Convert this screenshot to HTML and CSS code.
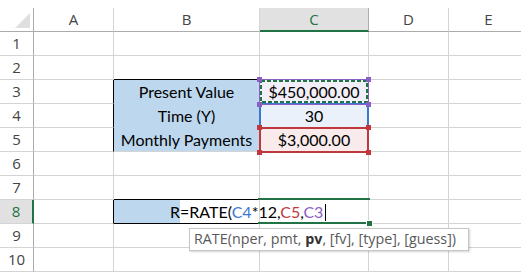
FILE: index.html
```html
<!DOCTYPE html>
<html>
<head>
<meta charset="utf-8">
<link rel="stylesheet" href="styles.css">
</head>
<body>
<div class="sheet">
  <div class="grid">
    <div class="corner"><span class="tri"></span></div>
    <div class="ch">A</div><div class="ch">B</div><div class="ch sel">C</div><div class="ch">D</div><div class="ch">E</div>

    <div class="rh">1</div><div class="c"></div><div class="c"></div><div class="c"></div><div class="c"></div><div class="c"></div>
    <div class="rh">2</div><div class="c"></div><div class="c bk-b"></div><div class="c"></div><div class="c"></div><div class="c"></div>
    <div class="rh">3</div><div class="c bk-r"></div><div class="c lab nb">Present Value</div><div class="c val v-p">$450,000.00</div><div class="c"></div><div class="c"></div>
    <div class="rh">4</div><div class="c bk-r"></div><div class="c lab nb">Time (Y)</div><div class="c val v-b">30</div><div class="c"></div><div class="c"></div>
    <div class="rh">5</div><div class="c bk-r"></div><div class="c lab">Monthly Payments</div><div class="c val v-r">$3,000.00</div><div class="c"></div><div class="c"></div>
    <div class="rh">6</div><div class="c"></div><div class="c"></div><div class="c"></div><div class="c"></div><div class="c"></div>
    <div class="rh">7</div><div class="c"></div><div class="c bk-b"></div><div class="c"></div><div class="c"></div><div class="c"></div>
    <div class="rh sel">8</div><div class="c bk-r"></div><div class="c edit-b"></div><div class="c"></div><div class="c"></div><div class="c"></div>
    <div class="rh">9</div><div class="c"></div><div class="c"></div><div class="c"></div><div class="c"></div><div class="c"></div>
    <div class="rh">10</div><div class="c"></div><div class="c"></div><div class="c"></div><div class="c"></div><div class="c"></div>
  </div>

  <div class="layer">
    <div class="ref ref-c4"></div>
    <div class="ref ref-c3">
      <svg class="ants" width="108" height="23" viewBox="0 0 108 23"><rect x="1" y="1" width="106" height="21" fill="none" stroke="#217346" stroke-width="2" stroke-dasharray="4 2"/></svg>
      <span class="h tl"></span><span class="h tr"></span><span class="h bl"></span><span class="h br"></span>
    </div>
    <div class="ref ref-c5">
      <span class="h tl"></span><span class="h tr"></span><span class="h bl"></span><span class="h br"></span>
    </div>
    <div class="active"><span class="fill"></span></div>
    <div class="formula">R=RATE(<span class="f-b">C4</span>*12,<span class="f-r">C5</span>,<span class="f-p">C3</span><span class="caret"></span></div>
  </div>

  <div class="tip">RATE(nper, pmt, <b>pv</b>, [fv], [type], [guess])</div>
</div>
</body>
</html>
```

FILE: styles.css
```css
html, body {
  margin: 0;
  padding: 0;
  background: #fff;
  overflow: hidden;
}
body {
  padding-top: 8px;
}
.sheet {
  position: relative;
  width: 529px;
  height: 264px;
}
.grid, .layer {
  display: grid;
  grid-template-columns: 34px 80px 146px 109px 80px 80px;
  grid-template-rows: repeat(11, 24px);
}
.layer {
  position: absolute;
  left: 0;
  top: 0;
  right: 0;
  bottom: 0;
  pointer-events: none;
}
.grid > div, .layer > div {
  box-sizing: border-box;
}
.corner {
  position: relative;
  border-right: 1px solid #ababab;
  border-bottom: 1px solid #ababab;
}
.tri {
  position: absolute;
  right: 3px;
  bottom: 3px;
  width: 0;
  height: 0;
  border-left: 15px solid transparent;
  border-bottom: 15px solid #dfdfdf;
}
.ch, .rh {
  font-family: "Open Sans", "Noto Sans", sans-serif;
  font-size: 15px;
  line-height: 23px;
  color: #444;
  text-align: center;
}
.ch {
  border-right: 1px solid #d4d4d4;
  border-bottom: 1px solid #ababab;
}
.ch.sel {
  background: #e1e1e1;
  color: #217346;
  border-bottom: 2px solid #217346;
  border-right-color: #ababab;
}
.rh {
  border-right: 1px solid #ababab;
  border-bottom: 1px solid #d4d4d4;
}
.rh.sel {
  background: #e1e1e1;
  color: #217346;
  border-right: 2px solid #217346;
}
.c {
  border-right: 1px solid #d4d4d4;
  border-bottom: 1px solid #d4d4d4;
  font-family: "Lato", "Liberation Sans", sans-serif;
  font-size: 16px;
  line-height: 23px;
  color: #000;
  white-space: nowrap;
}
.bk-r { border-right-color: #000; }
.bk-b { border-bottom-color: #000; }
.lab {
  background: #bdd7ee;
  text-align: center;
}
.lab.nb { border-bottom-color: #bdd7ee; }
.val { text-align: center; }
.v-p { background: #f3eff8; }
.v-b { background: #eaf1fa; }
.v-r { background: #f9ebeb; }
.edit-b {
  border-bottom-color: #000;
  background: linear-gradient(to right, #bdd7ee 66px, #fff 66px);
}

/* reference boxes */
.ref {
  position: relative;
  z-index: 2;
  grid-column: 4;
  margin: -1px 0 -1px -1px;
}
.ref-c4 {
  grid-row: 5;
  z-index: 1;
  border: 2px solid #3a78d0;
}
.ref-c3 {
  grid-row: 4;
  border: 1px solid #8a5fc4;
}
.ref-c5 {
  grid-row: 6;
  border: 2px solid #c0383e;
}
.ants {
  display: block;
}
.h {
  position: absolute;
  width: 5px;
  height: 5px;
}
.ref-c3 .h { background: #8a5fc4; }
.ref-c5 .h { background: #c0383e; }
.ref-c3 .tl { left: -3px; top: -3px; }
.ref-c3 .tr { right: -3px; top: -3px; }
.ref-c3 .bl { left: -3px; bottom: -3px; }
.ref-c3 .br { right: -3px; bottom: -3px; }
.ref-c5 .tl { left: -4px; top: -4px; }
.ref-c5 .tr { right: -4px; top: -4px; }
.ref-c5 .bl { left: -4px; bottom: -4px; }
.ref-c5 .br { right: -4px; bottom: -4px; }

/* active cell C8 */
.active {
  position: relative;
  z-index: 2;
  grid-column: 4;
  grid-row: 9;
  margin: -2px -1px 0 -2px;
  border-top: 2px solid #217346;
  border-bottom: 2px solid #217346;
}
.fill {
  position: absolute;
  right: -2px;
  bottom: -4px;
  width: 5px;
  height: 5px;
  background: #217346;
  box-shadow: 0 0 0 1px #fff;
}

/* in-cell formula editor text */
.formula {
  position: relative;
  z-index: 3;
  grid-column: 3 / 5;
  grid-row: 9;
  padding-left: 56px;
  font-family: "Lato", "Liberation Sans", sans-serif;
  font-size: 16px;
  line-height: 23px;
  color: #000;
  white-space: nowrap;
}
.f-b { color: #3a78d0; }
.f-r { color: #c0383e; }
.f-p { color: #8a5fc4; }
.caret {
  display: inline-block;
  width: 1px;
  height: 17px;
  margin-left: 2px;
  background: #000;
  vertical-align: -3px;
}

/* tooltip */
.tip {
  position: absolute;
  z-index: 5;
  left: 189px;
  top: 220px;
  width: 280px;
  height: 23px;
  box-sizing: border-box;
  background: #fff;
  border: 1px solid #c6c6c6;
  box-shadow: 1px 1px 2px rgba(0,0,0,0.18);
  padding-left: 4px;
  font-family: "Open Sans", "Noto Sans", sans-serif;
  font-size: 14.3px;
  line-height: 20px;
  color: #595959;
  white-space: nowrap;
}
.tip b {
  color: #333;
  font-weight: 700;
}
```
